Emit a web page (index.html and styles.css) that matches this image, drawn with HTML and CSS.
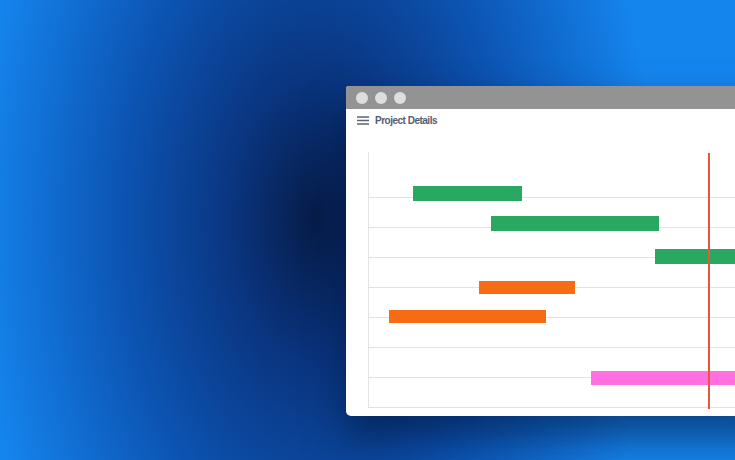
FILE: index.html
```html
<!DOCTYPE html>
<html lang="en">
<head>
<meta charset="utf-8">
<title>Project Details</title>
<link rel="stylesheet" href="styles.css">
</head>
<body>
<div class="stage">
  <div class="window">
    <div class="titlebar">
      <span class="dot"></span><span class="dot"></span><span class="dot"></span>
    </div>
    <div class="header">
      <svg class="menu" width="12" height="9" viewBox="0 0 12 9"><path d="M0 1h12M0 4.5h12M0 8h12" stroke="#5b6478" stroke-width="1.3"/></svg>
      <span class="title">Project Details</span>
    </div>
    <div class="chart">
      <div class="row row-first"><span class="bar green" style="margin-left:44px;width:109px;margin-top:34px;height:15px"></span></div>
      <div class="row"><span class="bar green" style="margin-left:122px;width:168px;margin-top:18px;height:15px"></span></div>
      <div class="row"><span class="bar green" style="margin-left:286px;width:140px;margin-top:21px;height:15px"></span></div>
      <div class="row"><span class="bar orange" style="margin-left:110px;width:96px;margin-top:23px;height:13px"></span></div>
      <div class="row"><span class="bar orange" style="margin-left:20px;width:157px;margin-top:22px;height:13px"></span></div>
      <div class="row"></div>
      <div class="row"><span class="bar pink" style="margin-left:222px;width:200px;margin-top:23px;height:14px"></span></div>
      <div class="row"></div>
      <div class="today"></div>
    </div>
  </div>
</div>
</body>
</html>
```
FILE: styles.css
```css
html, body {
  margin: 0;
  padding: 0;
  width: 735px;
  height: 460px;
  overflow: hidden;
}
body {
  background: radial-gradient(ellipse 340px 580px at 315px 220px, #061c48 0%, #0a3580 25%, #0c55b4 58%, #1585ee 100%);
  font-family: "Liberation Sans", Arial, sans-serif;
}
.stage {
  padding: 86px 0 0 346px;
}
.window {
  width: 430px;
  background: #fff;
  border-radius: 3px 3px 0 5px;
  box-shadow: 0 22px 40px rgba(2, 14, 50, 0.55);
  padding-bottom: 8px;
}
.titlebar {
  height: 23px;
  background: #939393;
  display: flex;
  align-items: center;
  gap: 7px;
  padding-left: 10px;
  border-radius: 3px 3px 0 0;
}
.dot {
  width: 12px;
  height: 12px;
  border-radius: 50%;
  background: #dedede;
}
.header {
  height: 22px;
  display: flex;
  align-items: center;
  padding-left: 11px;
  gap: 6px;
}
.menu { display: block; }
.title {
  font-size: 10px;
  font-weight: bold;
  color: #535d72;
  letter-spacing: -0.5px;
}
.chart {
  position: relative;
  margin: 21px 0 0 22px;
  border-left: 1px solid #e4e4e4;
}
.row {
  height: 29px;
  border-bottom: 1px solid #e2e2e2;
  display: flex;
  align-items: flex-start;
}
.row-first { height: 45px; }
.bar {
  display: block;
  flex: none;
}
.green { background: #29a862; }
.orange { background: #f56c15; }
.pink { background: #ff6fe0; }
.today {
  position: absolute;
  left: 339px;
  top: 1px;
  bottom: -1px;
  width: 1.5px;
  background: #e8563e;
}
```
